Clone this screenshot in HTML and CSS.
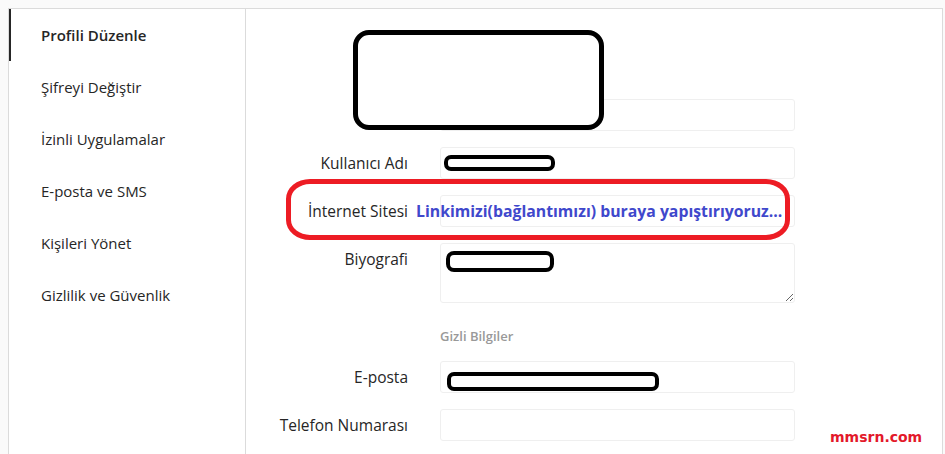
FILE: index.html
```html
<!DOCTYPE html>
<html lang="tr">
<head>
  <meta charset="UTF-8" />
  <meta name="viewport" content="width=device-width, initial-scale=1" />
  <title>Profili Düzenle</title>
  <link rel="stylesheet" href="styles.css">
</head>
<body>
  <div class="page">
    <ul class="side-nav">
      <li class="nav-item active">Profili Düzenle</li>
      <li class="nav-item">Şifreyi Değiştir</li>
      <li class="nav-item">İzinli Uygulamalar</li>
      <li class="nav-item">E-posta ve SMS</li>
      <li class="nav-item">Kişileri Yönet</li>
      <li class="nav-item">Gizlilik ve Güvenlik</li>
    </ul>

    <section class="edit-form">
      <div class="photo-row"></div>

      <div class="form-row">
        <label class="row-label">Adı</label>
        <div class="row-field"><input class="text-input" type="text"></div>
      </div>

      <div class="form-row">
        <label class="row-label">Kullanıcı Adı</label>
        <div class="row-field"><input class="text-input" type="text"></div>
      </div>

      <div class="form-row">
        <label class="row-label">İnternet Sitesi</label>
        <div class="row-field"><input class="text-input" type="text"></div>
      </div>

      <div class="form-row">
        <label class="row-label">Biyografi</label>
        <div class="row-field"><textarea class="text-area"></textarea></div>
      </div>

      <div class="form-row">
        <div class="row-label"></div>
        <div class="row-field section-title">Gizli Bilgiler</div>
      </div>

      <div class="form-row">
        <label class="row-label">E-posta</label>
        <div class="row-field"><input class="text-input" type="text"></div>
      </div>

      <div class="form-row">
        <label class="row-label">Telefon Numarası</label>
        <div class="row-field"><input class="text-input" type="text"></div>
      </div>
    </section>

    <!-- annotations drawn over the screenshot -->
    <div class="mark mark-photo"></div>
    <div class="mark mark-user"></div>
    <div class="mark mark-bio"></div>
    <div class="mark mark-mail"></div>
    <div class="circle-site"></div>
    <div class="note-link">Linkimizi(bağlantımızı) buraya yapıştırıyoruz...</div>
    <div class="watermark">mmsrn.com</div>
  </div>
</body>
</html>
```

FILE: styles.css
```css
html, body {
  margin: 0;
  padding: 0;
  background: #fafafa;
  font-family: 'Open Sans', 'Noto Sans', sans-serif;
  color: #262626;
  overflow: hidden;
}

.page {
  position: relative;
  display: flex;
  margin: 8px 2px 0 8px;
  height: 446px;
  background: #fff;
  border: 1px solid #dbdbdb;
  border-bottom: 0;
  box-sizing: border-box;
}

.side-nav {
  list-style: none;
  margin: 0;
  padding: 0;
  width: 237px;
  flex: 0 0 237px;
  border-right: 1px solid #dbdbdb;
  box-sizing: border-box;
}

.nav-item {
  padding: 16px 16px 16px 30px;
  border-left: 2px solid transparent;
  font-size: 15px;
  line-height: 20px;
  color: #262626;
}

.nav-item.active {
  border-left-color: #262626;
  font-weight: 600;
}

.edit-form {
  flex: 1;
  padding-top: 30px;
}

.photo-row {
  height: 44px;
  margin-bottom: 16px;
}

.form-row {
  display: flex;
  margin-bottom: 16px;
}

.row-label {
  flex: 0 0 194px;
  box-sizing: border-box;
  padding: 6px 32px 0 0;
  text-align: right;
  font-size: 15.5px;
  font-weight: 500;
  line-height: 20px;
  color: #262626;
}

.row-field {
  width: 355px;
}

.text-input,
.text-area {
  display: block;
  width: 100%;
  height: 32px;
  margin: 0;
  padding: 0 10px;
  box-sizing: border-box;
  border: 1px solid #efefef;
  border-radius: 3px;
  background: #fff;
  font-family: inherit;
  font-size: 15px;
}

.text-area {
  height: 60px;
  resize: vertical;
}

.section-title {
  height: 26px;
  padding-top: 8px;
  box-sizing: border-box;
  font-size: 13px;
  font-weight: 600;
  line-height: 18px;
  color: #999;
}

.mark {
  position: absolute;
  border: 4px solid #000;
  box-sizing: border-box;
  background: #fff;
}

.mark-photo {
  left: 344px;
  top: 21px;
  width: 251px;
  height: 100px;
  border-width: 5px;
  border-radius: 16px;
}

.mark-user {
  left: 435px;
  top: 146px;
  width: 111px;
  height: 16px;
  border-radius: 7px;
}

.mark-bio {
  left: 437px;
  top: 242px;
  width: 108px;
  height: 21px;
  border-radius: 8px;
}

.mark-mail {
  left: 438px;
  top: 363px;
  width: 212px;
  height: 19px;
  border-radius: 7px;
}

.circle-site {
  position: absolute;
  left: 277px;
  top: 170px;
  width: 504px;
  height: 61px;
  border: 5px solid #ed1c24;
  border-radius: 24px / 20px;
  box-sizing: border-box;
}

.note-link {
  position: absolute;
  left: 407px;
  top: 191px;
  font-size: 15.8px;
  font-weight: 700;
  line-height: 22px;
  color: #3f48cc;
  white-space: nowrap;
}

.watermark {
  position: absolute;
  left: 821px;
  top: 419px;
  font-family: 'DejaVu Sans', sans-serif;
  font-size: 14px;
  font-weight: 700;
  line-height: 18px;
  color: #e3182a;
}
```
